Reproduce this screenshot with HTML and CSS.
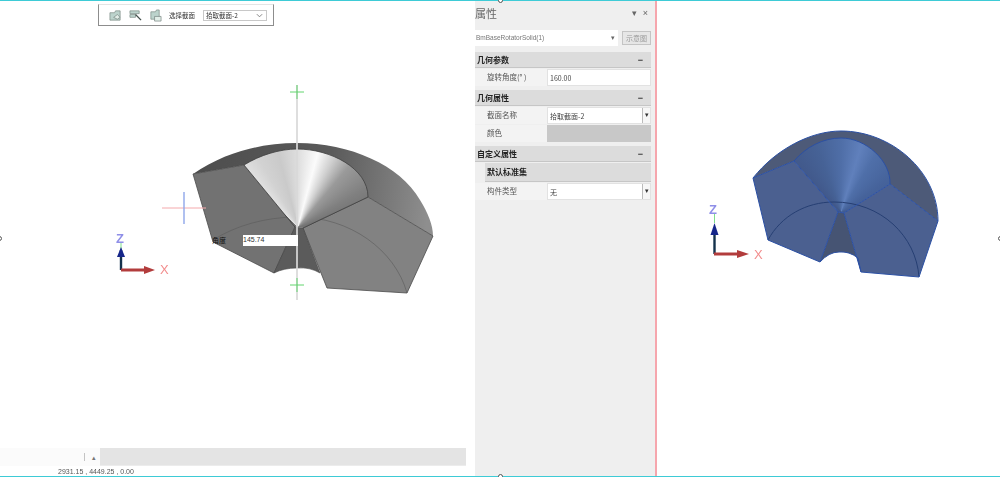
FILE: index.html
```html
<!DOCTYPE html>
<html lang="zh">
<head>
<meta charset="utf-8">
<title>属性</title>
<link rel="stylesheet" href="styles.css">
</head>
<body>
<div class="frame">
  <section class="viewport">
    <div class="canvas">
      <svg class="scene" viewBox="0 0 475 448" width="475" height="448">
        <defs>
          <linearGradient id="topGrey" gradientUnits="userSpaceOnUse" x1="200" y1="170" x2="430" y2="200">
            <stop offset="0" stop-color="#4e4e4e"/>
            <stop offset=".55" stop-color="#5a5a5a"/>
            <stop offset="1" stop-color="#8e8e8e"/>
          </linearGradient>
          <clipPath id="coneClip"><path d="M244 165C260 155 280 149 297 149C330 149 368 168 368 197L303 228L295 227Z"/></clipPath>
        </defs>
        <path class="g-top" d="M193 174C225 152 262 143 297 143C350 143 400 165 420 200C428 213 433 225 433 236L368 197L244 165Z"/>
        <path class="g-face" d="M193 174L244 165L295 227L274 273L213 242Z"/>
        <path class="g-face2" d="M368 197L433 236L407 293L327 288L303 228Z"/>
        <path class="g-arc" d="M213 240C235 226 265 217 297 217C350 217 395 250 407 293"/>
        <path class="g-notch" d="M295 227L303 228L320 273Q310 267 297 268Q284 268 274 273Z"/>
        <foreignObject x="240" y="140" width="132" height="92" clip-path="url(#coneClip)"><div class="cone cone-grey"></div></foreignObject>
        <path class="g-edge" d="M244 165C260 155 280 149 297 149C330 149 368 168 368 197L303 228M244 165L295 227"/>
        <path class="axis-shaft" d="M297 85V300"/>
        <path class="cross-green" d="M290 92H304M297 85V99M290 285H304M297 278V292"/>
        <path class="cross-red" d="M162 208H206"/>
        <path class="cross-blue" d="M184 192V224"/>
        <text class="ax-z" x="116" y="243">Z</text>
        <path class="ax-tick" d="M121 243V249"/>
        <path class="ax-stem" d="M121 250V270"/>
        <path class="ax-cap" d="M121 247L125 257H117Z"/>
        <path class="ax-bar" d="M121 270H146"/>
        <path class="ax-arrow" d="M144 266L155 270L144 274Z"/>
        <text class="ax-x" x="160" y="274">X</text>
      </svg>
      <div class="dim"><span class="dim-label">角度</span><span class="dim-value">145.74</span></div>
      <div class="toolbar">
        <svg class="tool" viewBox="0 0 14 14"><path class="tool-a" d="M1 4H6L7 2H12V12H1Z"/><path class="tool-b" d="M5 9L9 6L12 9L9 11Z"/></svg>
        <svg class="tool" viewBox="0 0 14 14"><path class="tool-a" d="M1 2H11V5H1ZM1 6H7V9H1Z"/><path class="tool-c" d="M7 6L13 12"/></svg>
        <svg class="tool" viewBox="0 0 14 14"><path class="tool-a" d="M2 3H7L8 1H11V11H2Z"/><path class="tool-b" d="M6 8H13V13H6Z"/></svg>
        <span class="tool-label">选择截面</span>
        <div class="tool-select"><span>拾取截面-2</span><svg class="chev" viewBox="0 0 8 5"><path d="M1 1L4 4L7 1"/></svg></div>
      </div>
    </div>
    <div class="tabbar">
      <div class="tab-white"><span class="tab-sep"></span><span class="tab-up">▴</span></div>
      <div class="tab-grey"></div>
      <div class="tab-end"></div>
    </div>
    <div class="status">2931.15 , 4449.25 , 0.00</div>
  </section>

  <aside class="panel">
    <header class="panel-head">
      <span class="panel-title">属性</span>
      <span class="panel-tools"><span>▾</span><span>×</span></span>
    </header>
    <div class="selector">
      <div class="selector-box"><span>BmBaseRotatorSolid(1)</span><span class="selector-arrow">▾</span></div>
      <div class="selector-btn">示意图</div>
    </div>
    <div class="group"><b>几何参数</b><i>−</i></div>
    <div class="row"><label>旋转角度(° )</label><div class="value">160.00</div></div>
    <div class="group"><b>几何属性</b><i>−</i></div>
    <div class="row"><label>截面名称</label><div class="value"><span>拾取截面-2</span><span class="drop">▾</span></div></div>
    <div class="row"><label>颜色</label><div class="value swatch"></div></div>
    <div class="group"><b>自定义属性</b><i>−</i></div>
    <div class="subgroup">默认标准集</div>
    <div class="row"><label>构件类型</label><div class="value"><span>无</span><span class="drop">▾</span></div></div>
  </aside>

  <section class="preview">
    <svg class="scene" viewBox="656 0 344 476" width="344" height="476">
      <defs>
        <clipPath id="coneClipBlue"><path d="M793 160C805 146 822 137 840 137C865 137 890 160 889 183L843 212L837 211Z"/></clipPath>
      </defs>
      <path class="b-top" d="M752 177C775 148 810 130 840 130C890 130 937 170 937 220L889 183L793 160Z"/>
      <path class="b-face" d="M752 177L793 160L837 211L819 261L767 239Z"/>
      <path class="b-face" d="M889 183L937 220L918 276L860 271L843 212Z"/>
      <path class="b-notch" d="M837 211L843 212L860 271L857 257Q848 250 838 251Q828 251 819 261Z"/>
      <foreignObject x="790" y="125" width="102" height="90" clip-path="url(#coneClipBlue)"><div class="cone cone-blue"></div></foreignObject>
      <path class="b-arc" d="M767 239C780 215 805 201 833 201C880 201 915 235 918 276"/>
      <path class="b-edge" d="M752 177C775 148 810 130 840 130C890 130 937 170 937 220L918 276L860 271L843 212L837 211L819 261L767 239ZM793 160C805 146 822 137 840 137C865 137 890 160 889 183M752 177L793 160L837 211M889 183L937 220M889 183L843 212M819 261Q828 251 838 251Q848 250 857 257L860 271"/>
      <text class="ax-z" x="708" y="213">Z</text>
      <path class="ax-tick" d="M713.500 213V222"/>
      <path class="ax-stem" d="M713.500 232V253"/>
      <path class="ax-cap" d="M713.500 222L717.500 234H709.500Z"/>
      <path class="ax-bar" d="M713 253H738"/>
      <path class="ax-arrow" d="M736 249L748 253L736 257Z"/>
      <text class="ax-x" x="753" y="258">X</text>
    </svg>
  </section>

  <span class="handle handle-top"></span>
  <span class="handle handle-bottom"></span>
  <span class="handle handle-left"></span>
  <span class="handle handle-right"></span>
</div>
</body>
</html>
```
FILE: styles.css
```css
* { box-sizing: border-box; }
html, body { margin: 0; padding: 0; height: 100%; background: #fff; overflow: hidden; }
body { font-family: "Noto Sans CJK SC", "Liberation Sans", sans-serif; color: #333; }

.frame {
  position: relative;
  display: flex;
  width: 1000px;
  height: 477px;
  border-top: 1px solid #3ecbd6;
  border-bottom: 1px solid #3ecbd6;
}

/* left modelling viewport */
.viewport { width: 475px; display: flex; flex-direction: column; background: #fff; }
.canvas { position: relative; height: 447px; }
.scene { display: block; filter: blur(.5px); }
.canvas .scene { margin-top: -1px; }

.g-top { fill: url(#topGrey); }
.g-face { fill: #727272; stroke: #4a4a4a; stroke-width: .8; }
.g-face2 { fill: #828282; stroke: #4a4a4a; stroke-width: .8; }
.g-notch { fill: #5b5b5b; stroke: #444; stroke-width: .6; }
.g-edge { fill: none; stroke: #3f3f3f; stroke-width: .8; }
.g-arc { fill: none; stroke: #5a5a5a; stroke-width: .6; }
.axis-shaft { stroke: #d9d9d9; stroke-width: 2; opacity: .85; }
.cross-green { fill: none; stroke: #62d56e; stroke-width: 1; }
.cross-red { stroke: #f4a9ac; stroke-width: 1; }
.cross-blue { stroke: #8fa6ea; stroke-width: 1.4; }

.cone { width: 100%; height: 100%; }
.cone-grey {
  background: conic-gradient(from -45deg at 58px 87px,
    #e4e4e4 0deg, #d2d2d2 15deg, #cacaca 30deg, #dedede 45deg, #fbfbfb 60deg,
    #d0d0d0 72deg, #9a9a9a 85deg, #808080 105deg, #747474 118deg, #747474 360deg);
}
.cone-blue {
  background: conic-gradient(from -45deg at 50px 86px,
    #41588a 0deg, #466296 25deg, #4f6ea7 45deg, #6080bc 62deg,
    #4f6fa9 76deg, #46639b 100deg, #3f5a90 130deg, #3f5a90 360deg);
}

.b-top { fill: #4d5a78; }
.b-face { fill: #4b6090; }
.b-notch { fill: #465473; }
.b-edge { fill: none; stroke: #2b50a4; stroke-width: 1; }
.b-arc { fill: none; stroke: #263f73; stroke-width: 1; }

.ax-z { font: 700 13px "Liberation Sans", sans-serif; fill: #8f8fe8; }
.ax-x { font: 400 13px "Liberation Sans", sans-serif; fill: #f28d8d; }
.ax-tick { stroke: #7ee08a; stroke-width: 1; fill: none; }
.ax-stem { stroke: #14324c; stroke-width: 2.4; fill: none; }
.ax-cap { fill: #16268a; }
.ax-bar { stroke: #b23c3c; stroke-width: 3; fill: none; }
.ax-arrow { fill: #b23c3c; }

.dim { position: absolute; left: 212px; top: 234px; display: flex; align-items: center; gap: 18px; height: 11px; }
.dim-label { font-size: 7px; color: #111; width: 13px; white-space: nowrap; line-height: 11px; }
.dim-value { width: 55px; height: 11px; background: #fff; font: 7px/10px "Liberation Sans", sans-serif; color: #333; }

.toolbar {
  position: absolute; left: 98px; top: 3px; width: 176px; height: 22px;
  display: flex; align-items: center; padding-left: 10px;
  background: #fff; border: 1px solid #8d8d8d; border-top-color: #e4e4e4;
  filter: blur(.3px);
}
.tool { width: 13px; height: 13px; margin-right: 7px; flex: none; }
.tool-a { fill: #bcd3cc; stroke: #75857f; stroke-width: .7; }
.tool-b { fill: #e2eee8; stroke: #6f7d78; stroke-width: .7; }
.tool-c { stroke: #44504c; stroke-width: 1.4; }
.tool-label { font-size: 6.500px; color: #333; white-space: nowrap; }
.tool-select {
  width: 64px; height: 11px; margin-left: 8px; padding: 0 3px 0 2px;
  display: flex; align-items: center; justify-content: space-between;
  border: 1px solid #c8c8c8; font-size: 6.500px; line-height: 9px; white-space: nowrap;
}
.chev { width: 7px; height: 5px; }
.chev path { fill: none; stroke: #777; stroke-width: 1; }

.tabbar { display: flex; height: 18px; }
.tab-white { width: 100px; display: flex; align-items: center; justify-content: flex-end; gap: 7px; padding-right: 4px; background: #fbfbfb; }
.tab-sep { width: 1px; height: 8px; background: #c4c4c4; }
.tab-up { font-size: 7px; line-height: 8px; color: #777; }
.tab-grey { width: 366px; background: #e4e4e4; border-bottom: 1px solid #ececec; }
.tab-end { flex: 1; background: #fff; }
.status { height: 10px; padding-left: 58px; font: 7px/11px "Liberation Sans", sans-serif; color: #555; filter: blur(.3px); }

/* property panel */
.panel { width: 182px; padding-right: 4px; background: #efefef; border-right: 2px solid #f6a6ad; filter: blur(.35px); }
.panel-head { height: 28px; display: flex; align-items: center; justify-content: space-between; padding: 0 3px 4px 0; }
.panel-title { font-size: 11px; color: #666; }
.panel-tools { display: flex; gap: 6px; font: 9px/10px "Liberation Sans", sans-serif; color: #666; }
.selector { display: flex; align-items: center; height: 16px; margin-top: 1px; }
.selector-box {
  width: 143px; height: 16px; padding: 0 3px 0 1px; background: #fff;
  display: flex; align-items: center; justify-content: space-between;
  font: 6.500px/14px "Liberation Sans", sans-serif; color: #777;
}
.selector-arrow { font-size: 7px; color: #666; }
.selector-btn {
  width: 29px; height: 14px; margin-left: 4px; border: 1px solid #c4c4c4; background: #e6e6e6;
  font-size: 7px; line-height: 12px; text-align: center; color: #999; white-space: nowrap;
}
.group {
  height: 16px; margin-top: 6px; padding: 0 8px 0 2px; background: #dcdcdc; border-bottom: 1px solid #c6c6c6;
  display: flex; align-items: center; justify-content: space-between;
  font-size: 8px; line-height: 14px; color: #222;
}
.group b { font-weight: 700; }
.group i { font: 700 9px/10px "Liberation Sans", sans-serif; color: #333; }
.row + .group { margin-top: 4px; }
.group + .row { margin-top: 1px; }
.row { display: flex; height: 17px; margin-bottom: 1px; align-items: stretch; }
.row label { width: 72px; padding-left: 12px; font-size: 7.500px; line-height: 16px; color: #555; white-space: nowrap; background: #f3f3f3; }
.value {
  flex: 1; padding-left: 2px; background: #fff; border: 1px solid #e2e2e2;
  display: flex; justify-content: space-between; align-items: center;
  font-size: 7px; line-height: 14px; color: #444;
}
.swatch { background: #c8c8c8; border-color: #c8c8c8; }
.drop { width: 8px; height: 100%; border-left: 1px solid #bbb; text-align: center; font: 7px/14px "Liberation Sans", sans-serif; color: #333; background: #f7f7f7; }
.subgroup {
  height: 19px; margin: 1px 0 1px 10px; padding-left: 2px; background: #dcdcdc; border-bottom: 1px solid #c6c6c6;
  font-size: 8px; font-weight: 700; line-height: 18px; color: #222;
}

.preview { flex: 1; background: #fff; }

/* selection handles on the frame */
.handle { position: absolute; width: 5px; height: 5px; border: 1px solid #555; border-radius: 50%; background: #fff; }
.handle-top { left: 498px; top: -3px; }
.handle-bottom { left: 498px; bottom: -3px; }
.handle-left { left: -3px; top: 235px; }
.handle-right { right: -3px; top: 235px; }
```
